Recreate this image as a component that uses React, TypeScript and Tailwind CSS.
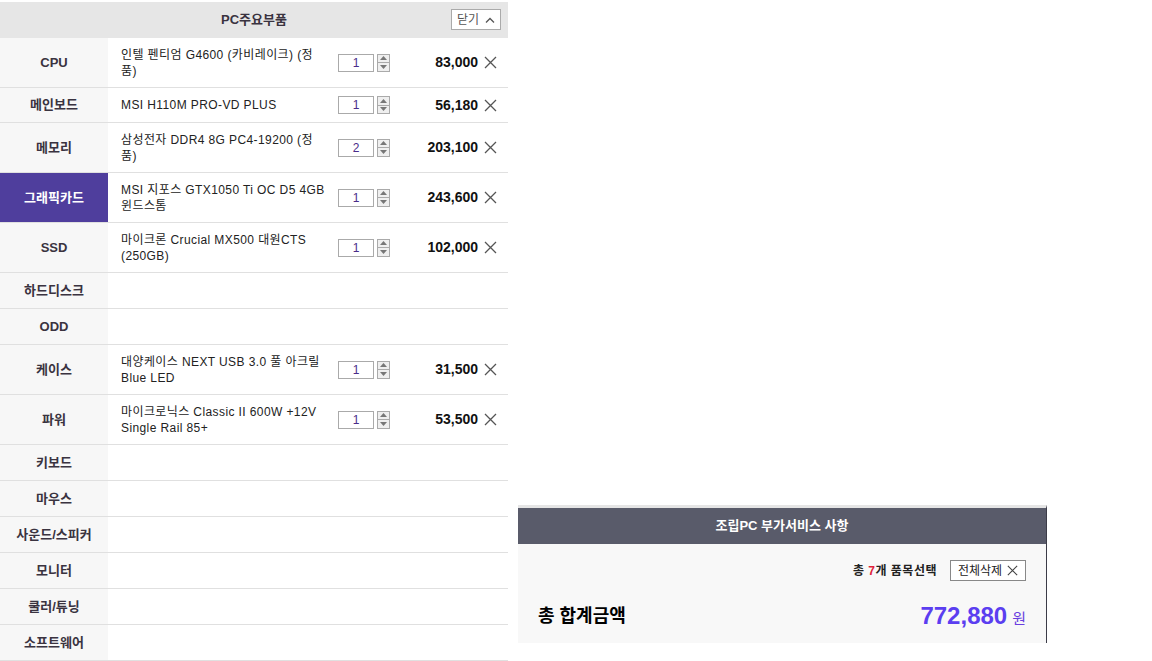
import React from 'react';

type Part = {
  label: string;
  name?: string[];
  qty?: number;
  price?: string;
  short?: boolean;
  active?: boolean;
};

const parts: Part[] = [
  { label: 'CPU', name: ['인텔 펜티엄 G4600 (카비레이크) (정', '품)'], qty: 1, price: '83,000' },
  { label: '메인보드', name: ['MSI H110M PRO-VD PLUS'], qty: 1, price: '56,180', short: true },
  { label: '메모리', name: ['삼성전자 DDR4 8G PC4-19200 (정', '품)'], qty: 2, price: '203,100' },
  { label: '그래픽카드', name: ['MSI 지포스 GTX1050 Ti OC D5 4GB', '윈드스톰'], qty: 1, price: '243,600', active: true },
  { label: 'SSD', name: ['마이크론 Crucial MX500 대원CTS', '(250GB)'], qty: 1, price: '102,000' },
  { label: '하드디스크' },
  { label: 'ODD' },
  { label: '케이스', name: ['대양케이스 NEXT USB 3.0 풀 아크릴', 'Blue LED'], qty: 1, price: '31,500' },
  { label: '파워', name: ['마이크로닉스 Classic II 600W +12V', 'Single Rail 85+'], qty: 1, price: '53,500' },
  { label: '키보드' },
  { label: '마우스' },
  { label: '사운드/스피커' },
  { label: '모니터' },
  { label: '쿨러/튜닝' },
  { label: '소프트웨어' },
];

function Cross({ size = 13, color = '#555' }: { size?: number; color?: string }) {
  return (
    <svg width={size} height={size} viewBox="0 0 13 13" fill="none">
      <path d="M1 1L12 12M12 1L1 12" stroke={color} strokeWidth="1.3" />
    </svg>
  );
}

function Spinner() {
  return (
    <div className="flex flex-col w-[13px] h-[18px] ml-[3px]">
      <div className="flex-1 border border-[#aaa] bg-[#efefef] flex items-center justify-center">
        <svg width="7" height="4" viewBox="0 0 7 4">
          <path d="M3.5 0L7 4H0z" fill="#777" />
        </svg>
      </div>
      <div className="flex-1 border border-t-0 border-[#aaa] bg-[#efefef] flex items-center justify-center">
        <svg width="7" height="4" viewBox="0 0 7 4">
          <path d="M0 0H7L3.5 4z" fill="#777" />
        </svg>
      </div>
    </div>
  );
}

function PartRow({ part }: { part: Part }) {
  const height = part.name ? (part.short ? 'h-[34px]' : 'h-[49px]') : 'h-[35px]';
  return (
    <div className={`flex border-b border-[#e0e0e0] box-content ${height}`}>
      <div
        className={`w-[108px] shrink-0 flex items-center justify-center text-[13px] font-bold ${
          part.active ? 'bg-[#4f3e9d] text-white' : 'bg-[#f7f7f7] text-[#3a3340]'
        }`}
      >
        {part.label}
      </div>
      {part.name && (
        <div className="flex-1 flex items-center pl-[13px] pr-[11px]">
          <div className="w-[217px] text-[12px] leading-[16px] tracking-[0.4px] text-[#222]">
            {part.name.map((line) => (
              <div key={line} className="whitespace-nowrap">
                {line}
              </div>
            ))}
          </div>
          <div className="w-[36px] h-[18px] border border-[#aaa] bg-white flex items-center justify-center text-[12px] text-[#4a2c8a]">
            {part.qty}
          </div>
          <Spinner />
          <div className="flex-1 text-right text-[14px] font-bold text-[#111]">{part.price}</div>
          <div className="ml-[6px]">
            <Cross />
          </div>
        </div>
      )}
    </div>
  );
}

export default function App() {
  return (
    <div
      className="flex items-start gap-[10px] bg-white min-h-[661px]"
      style={{ fontFamily: '"Liberation Sans", "Noto Sans CJK KR", sans-serif' }}
    >
      <div className="w-[508px] shrink-0 pt-[2px]">
        <div className="relative h-[36px] bg-[#e6e6e6] flex items-center justify-center">
          <span className="text-[13px] font-bold text-[#3a3340]">PC주요부품</span>
          <button className="absolute right-[7px] top-[7px] w-[50px] h-[21px] border border-[#aaa] bg-white flex items-center justify-between px-[5px] text-[12px] text-[#555]">
            <span>닫기</span>
            <svg width="10" height="6" viewBox="0 0 10 6" fill="none">
              <path d="M1 5.5L5 1.5L9 5.5" stroke="#555" strokeWidth="1.3" />
            </svg>
          </button>
        </div>
        {parts.map((p) => (
          <PartRow key={p.label} part={p} />
        ))}
      </div>

      <div className="w-[529px] mt-[505px] border-t-[3px] border-[#e5e5e5] border-r border-r-[#3c3c48]">
        <div className="h-[36px] bg-[#595b6a] flex items-center justify-center text-[13px] font-bold text-white">
          조립PC 부가서비스 사항
        </div>
        <div className="h-[99px] bg-[#f8f8f8] pt-[16px] pl-[20px] pr-[20px]">
          <div className="flex items-center justify-end">
            <span className="text-[12px] font-bold tracking-[0.5px] text-[#222]">
              총 <span className="text-[#e0203a]">7</span>개 품목선택
            </span>
            <button className="ml-[13px] w-[76px] h-[21px] border border-[#888] bg-white flex items-center justify-between px-[7px] text-[12px] text-[#222]">
              <span>전체삭제</span>
              <Cross size={11} color="#444" />
            </button>
          </div>
          <div className="flex items-center justify-between mt-[17px]">
            <span className="text-[18px] font-bold text-black">총 합계금액</span>
            <span className="flex items-baseline">
              <span className="text-[24px] font-bold text-[#5b3ef0]">772,880</span>
              <span className="ml-[5px] text-[15px] text-[#6a3fe0]">원</span>
            </span>
          </div>
        </div>
      </div>
    </div>
  );
}
